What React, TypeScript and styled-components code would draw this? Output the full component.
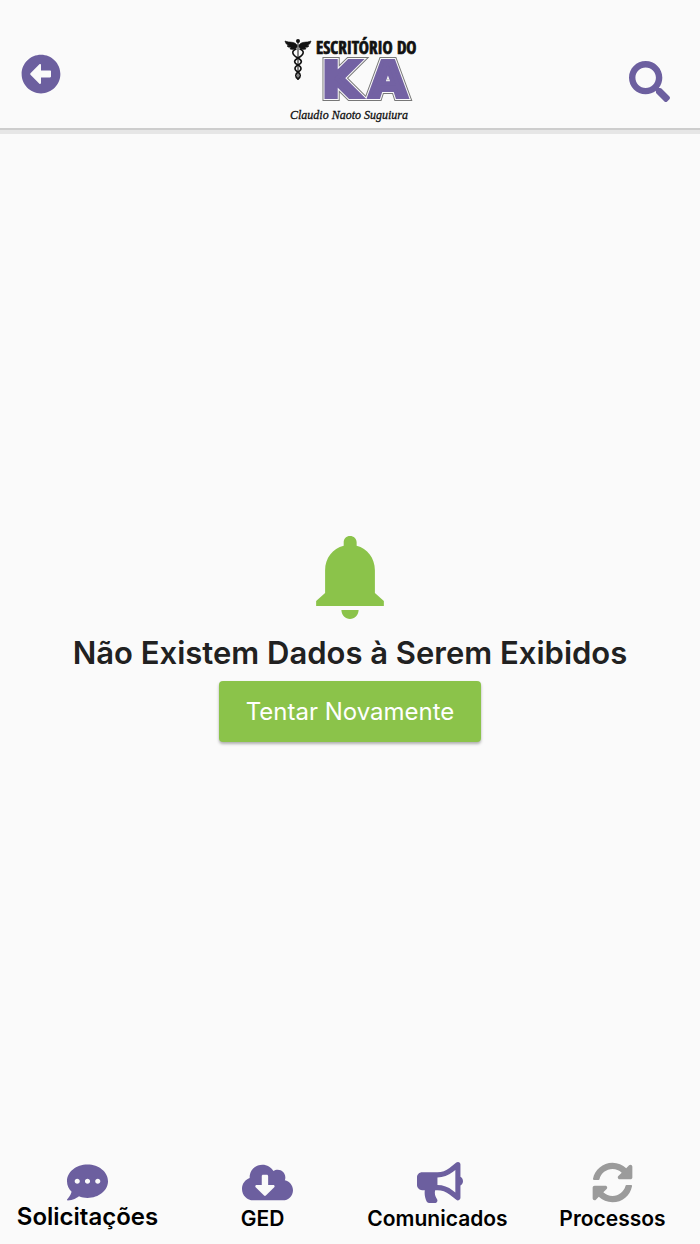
import React from "react";
import styled, { createGlobalStyle } from "styled-components";
import {
  FaArrowAltCircleLeft,
  FaBullhorn,
  FaCloudDownloadAlt,
  FaCommentDots,
  FaSearch,
  FaSyncAlt,
} from "react-icons/fa";

const purple = "#6c5f9f";
const green = "#8bc34a";

const GlobalStyle = createGlobalStyle`
  *, *::before, *::after { box-sizing: border-box; }
  body {
    margin: 0;
    background: #fafafa;
    color: #212121;
    font-family: Inter, "Liberation Sans", sans-serif;
  }
`;

const Screen = styled.div`
  display: flex;
  flex-direction: column;
  min-height: 100vh;
`;

const Header = styled.header`
  display: grid;
  grid-template-columns: 1fr auto 1fr;
  align-items: start;
  padding: 36px 30px 2px 21px;
  border-bottom: 2px solid #cdcdcd;
  box-shadow: 0 4px 0 #e6e6e6;
`;

const IconButton = styled.button<{ $end?: boolean }>`
  display: flex;
  justify-self: ${(p) => (p.$end ? "end" : "start")};
  margin-top: ${(p) => (p.$end ? 25 : 18)}px;
  padding: 0;
  border: 0;
  background: none;
  color: ${purple};
  font-size: ${(p) => (p.$end ? 41 : 40)}px;
  cursor: pointer;
`;

const Logo = styled.svg`
  display: block;
  width: 136px;
  height: 90px;
  margin-left: 9px;
`;

const Main = styled.main`
  flex: 1;
  display: flex;
  flex-direction: column;
  align-items: center;
  justify-content: center;
  padding: 4px 16px 0;
`;

const Bell = styled.svg`
  width: 68px;
  height: 83px;
  fill: ${green};
`;

const Message = styled.h1`
  margin: 14px 0 8px;
  font-size: 31px;
  line-height: 40px;
  font-weight: 600;
  text-align: center;
`;

const RetryButton = styled.button`
  height: 61px;
  padding: 0 27px;
  border: 0;
  border-radius: 4px;
  background: ${green};
  box-shadow: 0 2px 3px rgba(0, 0, 0, 0.3);
  color: #fff;
  font-family: inherit;
  font-size: 24px;
  font-weight: 400;
  cursor: pointer;
`;

const Nav = styled.nav`
  display: grid;
  grid-template-columns: repeat(4, 1fr);
  height: 100px;
  padding-top: 18px;
`;

const NavLink = styled.a<{ $active?: boolean }>`
  display: flex;
  flex-direction: column;
  align-items: center;
  color: #000;
  font-size: ${(p) => (p.$active ? 24 : 21)}px;
  line-height: ${(p) => (p.$active ? 28 : 32)}px;
  font-weight: 600;
  text-decoration: none;
`;

const NavIcon = styled.span<{ $muted?: boolean; $width: number }>`
  display: flex;
  width: 41px;
  height: 41px;
  color: ${(p) => (p.$muted ? "#9b9b9b" : purple)};

  svg {
    flex: none;
    width: ${(p) => p.$width}px;
    height: 41px;
  }
`;

const navItems = [
  { label: "Solicitações", Icon: FaCommentDots, width: 41, active: true },
  { label: "GED", Icon: FaCloudDownloadAlt, width: 51 },
  { label: "Comunicados", Icon: FaBullhorn, width: 46 },
  { label: "Processos", Icon: FaSyncAlt, width: 41, muted: true },
];

function BrandLogo() {
  return (
    <Logo viewBox="0 0 136 90" role="img" aria-label="Escritório do KA">
      <defs>
        <text
          id="ka"
          x="40"
          y="61"
          fontFamily="DejaVu Sans"
          fontSize="49"
          fontWeight="700"
        >
          K<tspan dx="9">A</tspan>
        </text>
      </defs>
      <g fill="none" stroke="#111" strokeLinecap="round">
        <path d="M16 6V43" strokeWidth="1" />
        <path
          d="M14 13C9 15 10 19 16 22C21 25 20 27 16 29C12 31 12 34 16 36C19 38 19 41 16 43"
          strokeWidth="1.6"
        />
        <path
          d="M18 13C23 15 22 19 16 22C11 25 12 27 16 29C20 31 20 34 16 36C13 38 13 41 16 43"
          strokeWidth="1.6"
        />
      </g>
      <circle cx="16" cy="5" r="2" fill="#111" />
      <path
        d="M15 9C12 5 8 7 3 5C4 9 6 9 7 9L5 10C7 12 8 11 9 11L8 13C11 14 14 13 15 11ZM17 9C20 5 24 7 29 5C28 9 26 9 25 9L27 10C25 12 24 11 23 11L24 13C21 14 18 13 17 11Z"
        fill="#111"
        stroke="#111"
        strokeWidth="0.6"
      />
      <text
        x="34"
        y="18"
        fontFamily="Liberation Sans Narrow, Open Sans Condensed, DejaVu Sans Condensed, sans-serif"
        fontSize="17"
        fontWeight="700"
        fill="#111"
        stroke="#111"
        strokeWidth="0.7"
      >
        ESCRITÓRIO DO
      </text>
      <use href="#ka" fill="#777" stroke="#777" strokeWidth="8" />
      <use href="#ka" fill="#fafafa" stroke="#fafafa" strokeWidth="6" />
      <use href="#ka" fill="#7362a3" stroke="#7362a3" strokeWidth="4" />
      <text
        x="8"
        y="83"
        fontFamily="Liberation Serif, serif"
        fontSize="12"
        fontStyle="italic"
        fill="#111"
        stroke="#111"
        strokeWidth="0.3"
      >
        Claudio Naoto Suguiura
      </text>
    </Logo>
  );
}

export default function App() {
  return (
    <Screen>
      <GlobalStyle />
      <Header>
        <IconButton type="button" aria-label="Voltar">
          <FaArrowAltCircleLeft />
        </IconButton>
        <BrandLogo />
        <IconButton type="button" aria-label="Pesquisar" $end>
          <FaSearch />
        </IconButton>
      </Header>
      <Main>
        <Bell viewBox="0 0 204 250" aria-hidden="true">
          <path d="M102 0C91 0 83 8 83 19V29C50 37 27 66 27 103V172L0 196V211H204V196L177 172V103C177 66 154 37 122 29V19C122 8 113 0 102 0ZM76 223C77 239 88 250 102 250S127 239 128 223Z" />
        </Bell>
        <Message>Não Existem Dados à Serem Exibidos</Message>
        <RetryButton type="button">Tentar Novamente</RetryButton>
      </Main>
      <Nav>
        {navItems.map(({ label, Icon, width, active, muted }) => (
          <NavLink
            key={label}
            href="#"
            $active={active}
            aria-current={active ? "page" : undefined}
          >
            <NavIcon $muted={muted} $width={width}>
              <Icon />
            </NavIcon>
            {label}
          </NavLink>
        ))}
      </Nav>
    </Screen>
  );
}
